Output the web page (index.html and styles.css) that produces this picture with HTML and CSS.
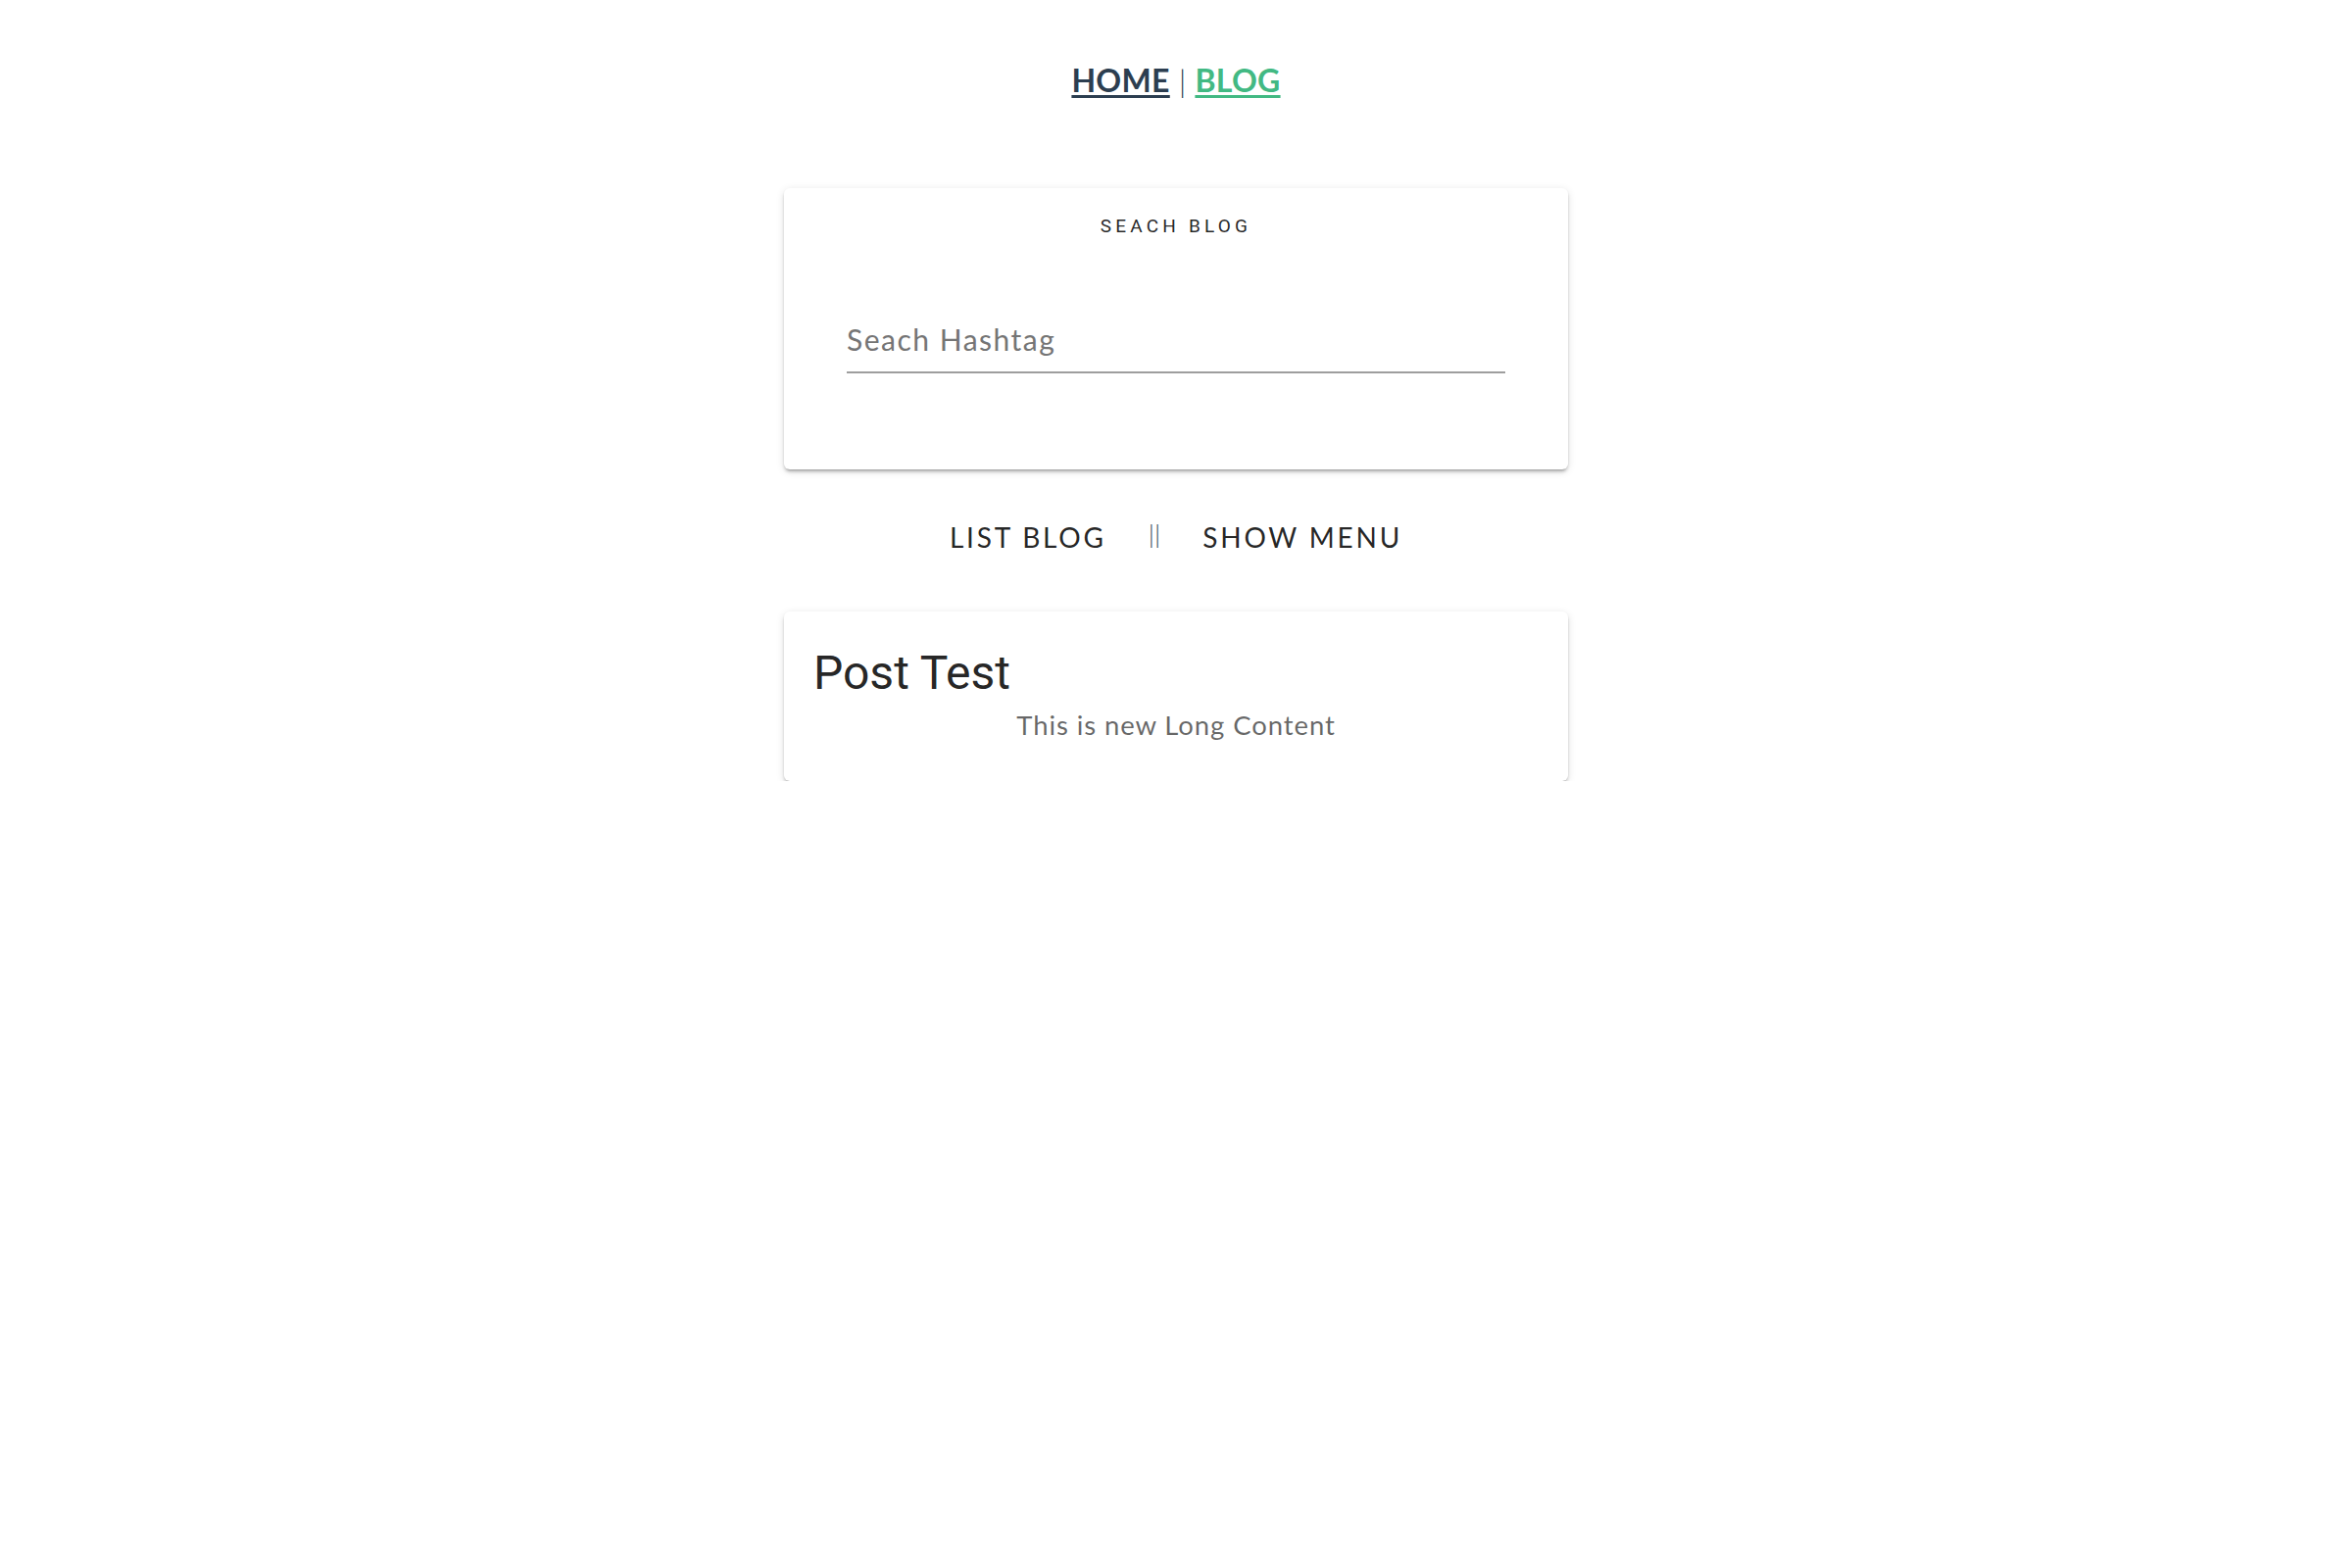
FILE: index.html
```html
<!DOCTYPE html>
<html>
<head>
<meta charset="utf-8">
<link rel="stylesheet" href="styles.css">
</head>
<body>
<div class="app">
  <nav class="nav">
    <a class="nav-link" href="#">HOME</a><span class="nav-sep">|</span><a class="nav-link active" href="#">BLOG</a>
  </nav>
  <section class="card search-card">
    <div class="overline">SEACH BLOG</div>
    <div class="field">
      <input class="field-input" type="text" placeholder="Seach Hashtag">
    </div>
  </section>
  <div class="actions">
    <span class="btn">LIST BLOG</span>
    <span class="bars">||</span>
    <span class="btn">SHOW MENU</span>
  </div>
  <section class="card post-card">
    <div class="post-title">Post Test</div>
    <div class="post-body">This is new Long Content</div>
  </section>
</div>
</body>
</html>
```
FILE: styles.css
```css
html, body {
  margin: 0;
  padding: 0;
  background: #ffffff;
}
.app {
  font-family: Lato, "Noto Sans", "Liberation Sans", sans-serif;
  color: #2c3e50;
  display: flex;
  flex-direction: column;
  align-items: center;
}
.nav {
  padding-top: 62px;
  height: 40px;
  line-height: 40px;
  font-size: 32px;
  font-weight: 700;
  text-align: center;
}
.nav-link {
  color: #2c3e50;
  text-decoration: underline;
  text-decoration-thickness: 3px;
  text-underline-offset: 3px;
  letter-spacing: 0.3px;
}
.nav-link.active {
  color: #42b983;
}
.nav-sep {
  font-weight: 300;
  margin: 0 9px;
  color: #2c3e50;
}
.card {
  width: 800px;
  box-sizing: border-box;
  background: #fff;
  border-radius: 6px;
  box-shadow: 0 4px 2px -3px rgba(0,0,0,.22), 0 3px 3px 0 rgba(0,0,0,.15), 0 2px 8px 0 rgba(0,0,0,.12);
}
.search-card {
  margin-top: 90px;
  height: 287px;
  padding: 24px 64px 0;
}
.overline {
  font-family: Roboto, "Liberation Sans", sans-serif;
  font-size: 19px;
  line-height: 30px;
  letter-spacing: 4.2px;
  font-weight: 400;
  color: rgba(0,0,0,.87);
  text-align: center;
}
.field {
  margin-top: 80px;
}
.field-input {
  display: block;
  width: 100%;
  box-sizing: border-box;
  height: 55px;
  padding: 0 0 13px;
  line-height: 40px;
  border: none;
  border-bottom: 2px solid #9e9e9e;
  outline: none;
  font-family: Lato, "Noto Sans", sans-serif;
  font-size: 30px;
  letter-spacing: 1.5px;
  color: rgba(0,0,0,.87);
  background: transparent;
}
.field-input::placeholder {
  color: #757575;
}
.actions {
  margin-top: 49px;
  display: flex;
  align-items: center;
  justify-content: center;
  gap: 43px;
  height: 40px;
  line-height: 40px;
}
.btn {
  font-size: 28px;
  letter-spacing: 2.8px;
  color: rgba(0,0,0,.87);
  font-weight: 400;
}
.bars {
  font-size: 26px;
  font-weight: 300;
  color: #2c3e50;
  position: relative;
  top: -4px;
}
.post-card {
  margin-top: 56px;
  height: 173px;
  padding: 35px 30px 0;
}
.post-title {
  font-family: Roboto, "Liberation Sans", sans-serif;
  font-size: 48px;
  line-height: 56px;
  font-weight: 400;
  color: rgba(0,0,0,.87);
}
.post-body {
  margin-top: 7px;
  font-size: 27.5px;
  line-height: 36px;
  letter-spacing: 0.9px;
  color: rgba(0,0,0,.6);
  text-align: center;
}
```
